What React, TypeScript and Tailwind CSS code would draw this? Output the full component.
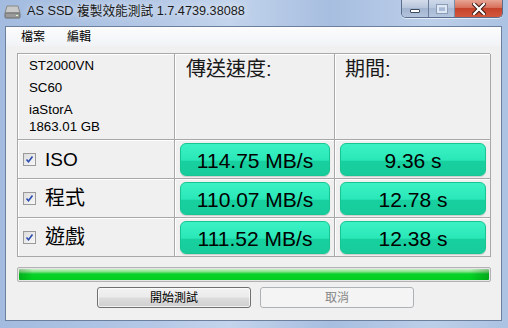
import React from "react";

const sans = "font-['Liberation_Sans','Noto_Sans_CJK_TC',sans-serif]";

interface ResultRow {
  label: string;
  speed: string;
  time: string;
}

const rows: ResultRow[] = [
  { label: "ISO", speed: "114.75 MB/s", time: "9.36 s" },
  { label: "程式", speed: "110.07 MB/s", time: "12.78 s" },
  { label: "遊戲", speed: "111.52 MB/s", time: "12.38 s" },
];

// ── Title bar pieces ──────────────────────────────────────────────
function DriveIcon() {
  return (
    <svg width="17" height="14" viewBox="0 0 17 14">
      <path d="M3 1h11l2 7H1z" fill="#c9c9c9" stroke="#8a8a8a" />
      <rect x="1" y="8" width="15" height="5" rx="1" fill="#9a9a9a" stroke="#6c6c6c" />
      <rect x="12" y="10" width="2" height="1" fill="#d8ffd8" />
    </svg>
  );
}

function CaptionButtons() {
  return (
    <div className="flex h-[18px] rounded-b-[5px] border border-t-0 border-[#5a6d8c] overflow-hidden shadow-[0_1px_0_rgba(255,255,255,0.6)]">
      <div className="w-[27px] flex items-center justify-center border-r border-[#6b7d9b] bg-[linear-gradient(to_bottom,#d3dcea_0%,#b8c6dc_45%,#a3b4cf_50%,#b3c3dc_100%)]">
        <div className="w-[10px] h-[4px] mt-[5px] bg-white border border-[#3c4a60] rounded-[1px]" />
      </div>
      <div className="w-[26px] flex items-center justify-center border-r border-[#6b7d9b] bg-[linear-gradient(to_bottom,#d3dcea_0%,#b8c6dc_45%,#a3b4cf_50%,#b3c3dc_100%)] opacity-80">
        <div className="w-[10px] h-[8px] border-2 border-[#e8eef7] outline outline-1 outline-[#8090a8]" />
      </div>
      <div className="w-[47px] flex items-center justify-center bg-[linear-gradient(to_bottom,#e7a493_0%,#d8705a_45%,#c5432a_50%,#d2573c_100%)]">
        <svg width="14" height="12" viewBox="0 0 14 12">
          <path d="M2 1l10 10M12 1L2 11" stroke="#3b1a14" strokeWidth="4.2" strokeLinecap="square" />
          <path d="M2 1l10 10M12 1L2 11" stroke="#ffffff" strokeWidth="2.2" strokeLinecap="square" />
        </svg>
      </div>
    </div>
  );
}

// ── Table pieces ──────────────────────────────────────────────────
function Cell({ children, className = "" }: { children?: React.ReactNode; className?: string }) {
  return (
    <div className={`bg-[#f0f0f0] border-r border-b border-[#a8a8a8] shadow-[inset_1px_1px_0_#ffffff] ${className}`}>
      {children}
    </div>
  );
}

function CheckBox() {
  return (
    <div className="w-[13px] h-[13px] border border-[#9a9a9a] bg-[linear-gradient(135deg,#dcdcdc,#f8f8f8)] flex items-center justify-center">
      <svg width="9" height="9" viewBox="0 0 9 9">
        <path d="M1.5 4.5l2 2.3L7.5 1.5" fill="none" stroke="#2a4cb0" strokeWidth="1.6" />
      </svg>
    </div>
  );
}

function ValueBox({ children }: { children: React.ReactNode }) {
  return (
    <div className="h-full rounded-[6px] border border-[#17c592] bg-[linear-gradient(to_bottom,#3cf2c5_0%,#2ae7b8_52%,#18d09f_56%,#17cc9c_100%)] shadow-[0_1px_1px_rgba(0,0,0,0.15)] flex items-center justify-center text-[21px] text-black leading-none pt-[1px]">
      {children}
    </div>
  );
}

// ── App ───────────────────────────────────────────────────────────
export default function App() {
  return (
    <div
      className={`w-[508px] h-[328px] overflow-hidden flex flex-col bg-[linear-gradient(to_right,#a2bbdf_0%,#b4c8e6_30%,#c3d4ec_45%,#a7bee0_65%,#bccfe9_85%,#abc2e2_100%)] ${sans}`}
    >
      {/* Title bar */}
      <div className="h-[26px] flex items-start pl-[4px] pr-[5px]">
        <div className="mt-[5px]">
          <DriveIcon />
        </div>
        <div className="ml-[6px] mt-[4px] text-[12.7px] leading-[15px] text-[#1a1a1a] [text-shadow:0_0_6px_rgba(255,255,255,0.9)]">
          AS SSD 複製效能測試 1.7.4739.38088
        </div>
        <div className="ml-auto">
          <CaptionButtons />
        </div>
      </div>

      {/* Client area */}
      <div className="ml-[5px] mr-[6px] mb-[7px] flex-1 flex flex-col bg-[#f0f0f0] border border-[#6c7f9c]">
        {/* Menu */}
        <div className="h-[19px] flex items-center gap-[22px] pl-[15px] text-[12px] text-black bg-[linear-gradient(to_bottom,#fcfcfd,#f1f3f7)]">
          <span>檔案</span>
          <span>編輯</span>
        </div>

        <div className="px-[11px] pt-[7px] flex flex-col">
          {/* Result grid */}
          <div className="grid grid-cols-[157px_160px_156px] grid-rows-[86px_39px_39px_39px] border-t border-l border-[#a8a8a8]">
            <Cell className="pl-[11px] pt-[4px] text-[13.3px] text-black leading-none">
              <div className="mt-[1px]">ST2000VN</div>
              <div className="mt-[9px]">SC60</div>
              <div className="mt-[8px]">iaStorA</div>
              <div className="mt-[4px]">1863.01 GB</div>
            </Cell>
            <Cell className="pl-[11px] pt-[3px] text-[20px] text-[#1a1a1a] leading-[24px]">傳送速度:</Cell>
            <Cell className="pl-[10px] pt-[3px] text-[20px] text-[#1a1a1a] leading-[24px]">期間:</Cell>

            {rows.map((r) => (
              <React.Fragment key={r.label}>
                <Cell className="flex items-center pl-[5px] gap-[9px]">
                  <CheckBox />
                  <span className={`${r.label === "ISO" ? "text-[19px]" : "text-[20px]"} text-black leading-none`}>{r.label}</span>
                </Cell>
                <Cell className="pl-[5px] pr-[4px] pt-[3px] pb-[2px]">
                  <ValueBox>{r.speed}</ValueBox>
                </Cell>
                <Cell className="pl-[5px] pr-[4px] pt-[3px] pb-[2px]">
                  <ValueBox>{r.time}</ValueBox>
                </Cell>
              </React.Fragment>
            ))}
          </div>

          {/* Progress */}
          <div className="mt-[10px] w-[474px] h-[15px] rounded-[2px] border border-[#b2b2b2] p-px bg-[#e6e6e6]">
            <div className="h-full rounded-[1px] bg-[linear-gradient(to_bottom,#c9f2c9_0%,#86e28a_25%,#08d22a_45%,#00cf1e_100%)] relative overflow-hidden">
              <div className="absolute inset-0 bg-[linear-gradient(to_right,rgba(0,80,0,0.25)_0%,rgba(0,0,0,0)_3%,rgba(0,0,0,0)_96%,rgba(0,80,0,0.3)_100%)]" />
            </div>
          </div>

          {/* Buttons */}
          <div className="mt-[5px] flex pl-[80px] gap-[9px]">
            <button className="w-[154px] h-[21px] rounded-[3px] border border-[#707070] bg-[linear-gradient(to_bottom,#f2f2f2_0%,#ebebeb_48%,#dddddd_52%,#cfcfcf_100%)] shadow-[inset_0_0_0_1px_rgba(255,255,255,0.7)] text-[12px] text-black leading-none">
              開始測試
            </button>
            <button className="w-[154px] h-[21px] rounded-[3px] border border-[#adb2b5] bg-[#f4f4f4] text-[12px] text-[#858585] leading-none">
              取消
            </button>
          </div>
        </div>
      </div>
    </div>
  );
}
